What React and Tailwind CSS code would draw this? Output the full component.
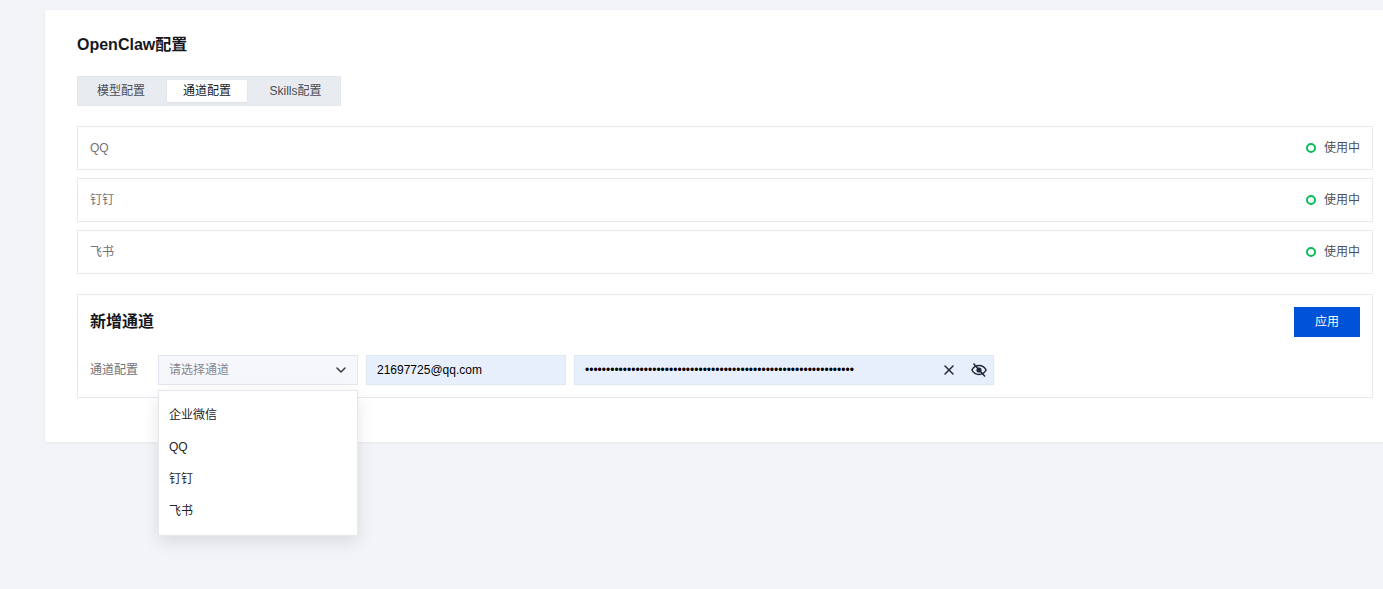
import { ChevronDown, X } from 'lucide-react'

const font = "font-['Liberation_Sans','Noto_Sans_CJK_SC',sans-serif]"

const channels = ['QQ', '钉钉', '飞书']
const options = ['企业微信', 'QQ', '钉钉', '飞书']

function EyeOff() {
  return (
    <svg viewBox="0 0 16 16" className="w-4 h-4" fill="none" stroke="#1f2937" strokeWidth="1.5">
      <path d="M0.9 8C2.4 5.1 5 3.5 8 3.5s5.6 1.600 7.100 4.500c-1.500 2.900-4.100 4.500-7.100 4.500S2.400 10.900 0.900 8z" />
      <circle cx="8" cy="8" r="2.600" fill="#1f2937" stroke="none" />
      <path d="M2.500 1.500l11.500 13" />
    </svg>
  )
}

export default function App() {
  return (
    <div className={`${font} min-h-[589px] h-[589px] overflow-hidden bg-[#f3f4f8] pl-[45px] pt-[10px]`}>
      <div className="bg-white pl-8 pr-[10px] pt-6 pb-11 shadow-[0_1px_3px_rgba(0,0,0,0.05)]">
        <h1 className="text-base leading-[22px] font-bold text-[#16181d]">OpenClaw配置</h1>

        <div className="mt-[20px] w-[264px] h-[30px] bg-[#e8ebf0] border border-[#e3e6eb] flex items-center text-xs text-[#4b4f56]">
          <div className="w-[86px] mr-[3px] text-center">模型配置</div>
          <div className="w-[80px] h-[22px] leading-[22px] bg-white text-center text-[#16181d] shadow-[0_1px_2px_rgba(0,0,0,0.06)]">通道配置</div>
          <div className="flex-1 pl-1 text-center">Skills配置</div>
        </div>

        <div className="mt-5 flex flex-col gap-2">
          {channels.map((name) => (
            <div key={name} className="h-11 border border-[#e6e8ee] flex items-center justify-between pl-3 pr-3 text-xs">
              <span className="text-[#6f7278]">{name}</span>
              <span className="flex items-center gap-2 text-[#4b4f56]">
                <span className="w-2.5 h-2.5 rounded-full border-2 border-[#0abf5b]" />
                使用中
              </span>
            </div>
          ))}
        </div>

        <div className="mt-5 h-[104px] border border-[#e6e8ee] px-3 pt-3">
          <div className="flex items-center justify-between h-[30px]">
            <h2 className="text-base font-bold text-[#16181d]">新增通道</h2>
            <button className="w-[66px] h-[30px] bg-[#0052d9] text-white text-xs">应用</button>
          </div>
          <div className="mt-[18px] flex items-center text-xs">
            <span className="w-[68px] text-[#6f7278]">通道配置</span>
            <div className="relative w-[200px]">
              <div className="h-[30px] bg-[#f5f7fb] border border-[#e3e6ef] flex items-center justify-between pl-2.5 pr-2 text-[#85888e]">
                请选择通道
                <ChevronDown className="w-4 h-4 text-[#33373d]" strokeWidth={2.25} />
              </div>
              <div className="absolute left-0 top-[35px] z-10 w-[200px] h-[146px] bg-white border border-[#e6e8ee] py-2 shadow-[0_6px_16px_rgba(0,0,0,0.1)]">
                {options.map((o) => (
                  <div key={o} className="h-8 leading-8 pl-2.5 text-[#1f2126]">{o}</div>
                ))}
              </div>
            </div>
            <div className="ml-2 w-[200px] h-[30px] bg-[#e8effc] border border-[#e1e8f5] flex items-center pl-2.5 text-black">21697725@qq.com</div>
            <div className="ml-2 w-[420px] h-[30px] bg-[#e8effc] border border-[#e1e8f5] flex items-center justify-between pl-2.5 pr-[6px] text-black">
              <span>{'•'.repeat(64)}</span>
              <span className="flex items-center gap-[14px]">
                <X className="w-4 h-4 text-[#1f2937]" strokeWidth={2.25} />
                <EyeOff />
              </span>
            </div>
          </div>
        </div>
      </div>
    </div>
  )
}
